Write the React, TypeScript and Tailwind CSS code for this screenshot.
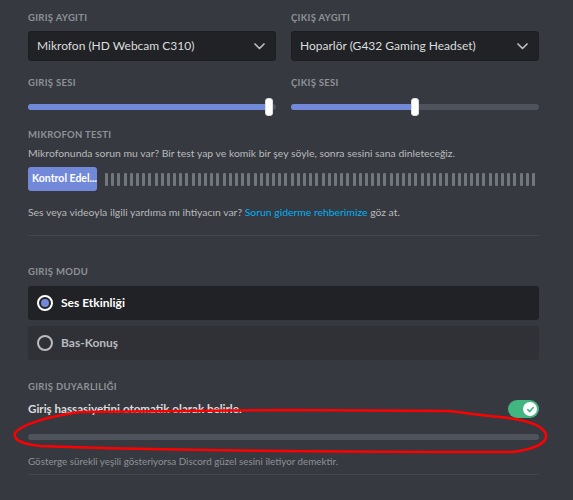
import React from 'react'

const font = { fontFamily: 'Lato, "Noto Sans", sans-serif' }

function Label({ children, className = '' }: { children: React.ReactNode; className?: string }) {
  return (
    <div className={`text-[9.5px] font-bold uppercase leading-[16px] tracking-[0.3px] text-[#8e9297] ${className}`}>
      {children}
    </div>
  )
}

function Select({ value }: { value: string }) {
  return (
    <div className="mt-[5px] flex h-[30px] items-center justify-between rounded-[3px] border border-[#1d1e21] bg-[#202225] pl-[8px] pr-[10px]">
      <span className="whitespace-nowrap text-[12px] text-[#dcddde]">{value}</span>
      <svg width="11" height="7" viewBox="0 0 11 7" fill="none">
        <path d="M1 1 L5.5 5.5 L10 1" stroke="#b9bbbe" strokeWidth="1.7" strokeLinecap="round" strokeLinejoin="round" />
      </svg>
    </div>
  )
}

function Slider({ pct }: { pct: number }) {
  return (
    <div className="relative mt-[4px] flex h-[24px] items-center">
      <div className="h-[6px] w-full rounded-full bg-[#4f545c]">
        <div className="h-full rounded-full bg-[#7289da]" style={{ width: `${pct}%` }} />
      </div>
      <div
        className="absolute top-[3px] h-[18px] w-[8px] -translate-x-1/2 rounded-[3px] border border-[#dcddde] bg-white"
        style={{ left: `${pct}%` }}
      />
    </div>
  )
}

function Radio({ label, checked }: { label: string; checked?: boolean }) {
  return (
    <div
      className={`flex h-[34px] items-center gap-[8px] rounded-[3px] px-[9px] ${checked ? 'bg-[#212226]' : 'bg-[#2f3136]'}`}
    >
      <div
        className={`flex h-[16px] w-[16px] items-center justify-center rounded-full border-2 ${checked ? 'border-white' : 'border-[#b9bbbe]'}`}
      >
        {checked && <div className="h-[8px] w-[8px] rounded-full bg-[#7289da]" />}
      </div>
      <span className={`text-[12px] font-bold ${checked ? 'text-white' : 'text-[#b9bbbe]'}`}>{label}</span>
    </div>
  )
}

export default function App() {
  const bars = Array.from({ length: 70 }, (_, i) => i)
  return (
    <div className="relative h-[500px] w-[573px] overflow-hidden bg-[#36393f]" style={font}>
      <div className="pl-[28px] pr-[34px] pt-[10px]">
        <div className="grid grid-cols-2 gap-x-[15px]">
          <div>
            <Label>Giriş Aygıtı</Label>
            <Select value="Mikrofon (HD Webcam C310)" />
            <Label className="mt-[14px]">Giriş Sesi</Label>
            <Slider pct={97} />
          </div>
          <div>
            <Label>Çıkış Aygıtı</Label>
            <Select value="Hoparlör (G432 Gaming Headset)" />
            <Label className="mt-[14px]">Çıkış Sesi</Label>
            <Slider pct={50} />
          </div>
        </div>

        <Label className="mt-[8px]">Mikrofon Testi</Label>
        <p className="mt-[1px] whitespace-nowrap text-[10.4px] leading-[18px] text-[#b9bbbe]">
          Mikrofonunda sorun mu var? Bir test yap ve komik bir şey söyle, sonra sesini sana dinleteceğiz.
        </p>
        <div className="mt-[5px] flex h-[24px] items-center gap-[8px]">
          <button className="h-[24px] w-[69px] shrink-0 overflow-hidden whitespace-nowrap rounded-[3px] bg-[#7289da] px-[4px] text-left text-[10.5px] font-bold text-white">
            Kontrol Edel...
          </button>
          <div className="mr-[3px] flex flex-1 items-center justify-between">
            {bars.map((i) => (
              <div key={i} className="h-[13px] w-[3px] rounded-[1px] bg-[#72767d]" />
            ))}
          </div>
        </div>
        <p className="mt-[12px] whitespace-nowrap text-[10.4px] leading-[18px] text-[#b9bbbe]">
          Ses veya videoyla ilgili yardıma mı ihtiyacın var?{' '}
          <span className="text-[#00b0f4]">Sorun giderme rehberimize</span> göz at.
        </p>
        <div className="mt-[14px] h-px bg-[#42454a]" />

        <Label className="mt-[28px]">Giriş Modu</Label>
        <div className="mt-[6px] flex flex-col gap-[6px]">
          <Radio label="Ses Etkinliği" checked />
          <Radio label="Bas-Konuş" />
        </div>

        <Label className="mt-[19px]">Giriş Duyarlılığı</Label>
        <div className="mt-[2px] flex h-[24px] items-center justify-between">
          <span className="text-[11.6px] font-bold text-[#dcddde]">Giriş hassasiyetini otomatik olarak belirle.</span>
          <div className="flex h-[18px] w-[31px] items-center justify-end rounded-full bg-[#43b581] pr-[2px]">
            <div className="flex h-[14px] w-[14px] items-center justify-center rounded-full bg-white">
              <svg width="9" height="9" viewBox="0 0 10 10" fill="none">
                <path d="M2 5.2 L4.2 7.3 L8 2.8" stroke="#43b581" strokeWidth="1.8" strokeLinecap="round" strokeLinejoin="round" />
              </svg>
            </div>
          </div>
        </div>
        <div className="mt-[13px] h-[6px] rounded-full bg-[#4f545c]" />
        <p className="mt-[13px] whitespace-nowrap text-[9.8px] leading-[16px] text-[#8e9297]">
          Gösterge sürekli yeşili gösteriyorsa Discord güzel sesini iletiyor demektir.
        </p>
        <div className="mt-[5px] h-px bg-[#42454a]" />
      </div>

      {/* hand-drawn red annotation */}
      <svg className="pointer-events-none absolute left-0 top-0" width="573" height="500" viewBox="0 0 573 500" fill="none">
        <path
          d="M 290 410 L 80 412 C 50 416, 22 424, 15 433 C 13 440, 22 444, 40 446 C 120 449, 300 452, 513 452 C 535 449, 547 443, 546 435 C 544 426, 530 420, 500 417 C 470 414, 462 412, 446 411 L 290 410"
          stroke="#ff0000"
          strokeWidth="2.5"
          strokeLinecap="round"
          strokeLinejoin="round"
        />
      </svg>
    </div>
  )
}
